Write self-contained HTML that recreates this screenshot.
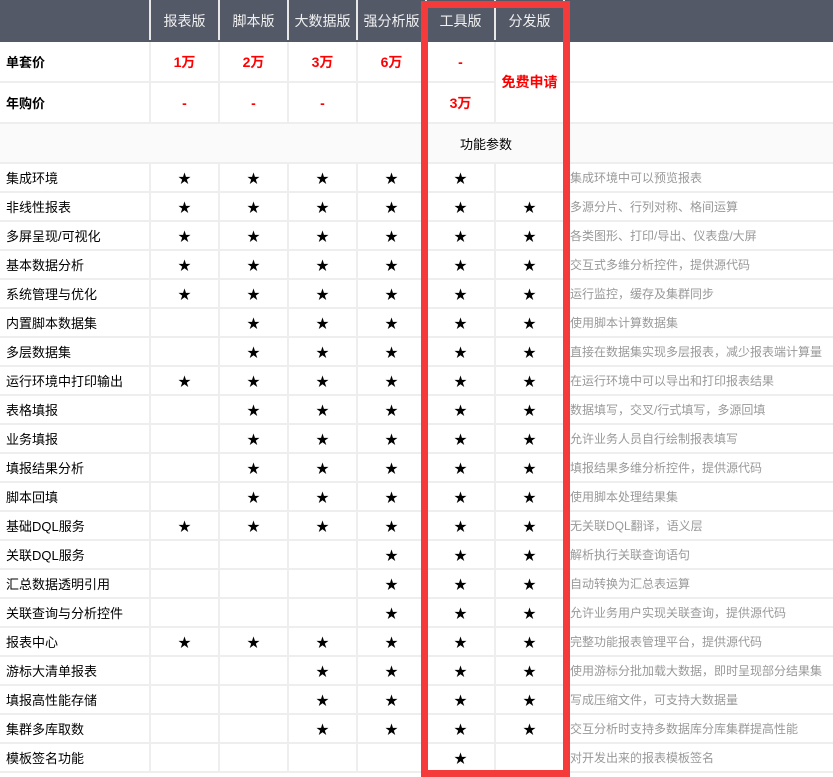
<!DOCTYPE html>
<html><head><meta charset="utf-8"><style>
*{margin:0;padding:0;box-sizing:border-box}
body{width:833px;height:777px;background:#fff;overflow:hidden;position:relative;font-family:"Liberation Sans","Noto Sans CJK SC",sans-serif}
table{border-collapse:collapse;table-layout:fixed;width:833px;position:absolute;left:0;top:0}
td{border:2px solid #eeeeee;text-align:center;font-size:13px;color:#000;padding:0;white-space:nowrap;overflow:hidden}
td:first-child{border-left:none}
tr.h td{background:#535967;color:#f0f0f0;height:40px;border-color:#535967;border-left-color:#e8e8e8;border-right-color:#e8e8e8;font-size:14px}
tr.h td:first-child{border-left-color:#535967}
tr.h td:last-child{border-right-color:#535967}
tr.p td{height:41px}
td.l{text-align:left;padding-left:6px;font-size:13px}
td.b{font-weight:bold}
td.r{color:#f00;font-weight:bold;font-size:14px}
tr.f td{height:29px}
td.d{text-align:left;color:#999;font-size:12px;padding-left:5px;border-left:none;border-right:none}
tr.g td{background:#fafafa;height:40px;border-left:none;border-right:none}
tr.p td.e{border-right:none}
.box{position:absolute;left:421px;top:1px;width:149px;height:776px;border:7px solid #f43a3a}
</style></head><body>
<table>
<colgroup><col style="width:150px"><col style="width:69px"><col style="width:69px"><col style="width:69px"><col style="width:69px"><col style="width:69px"><col style="width:69px"><col style="width:269px"></colgroup>
<tr class="h"><td></td><td>报表版</td><td>脚本版</td><td>大数据版</td><td>强分析版</td><td>工具版</td><td>分发版</td><td></td></tr>
<tr class="p"><td class="l b">单套价</td><td class="r">1万</td><td class="r">2万</td><td class="r">3万</td><td class="r">6万</td><td class="r">-</td><td class="r" rowspan="2">免费申请</td><td class="e" style="border-left:2px solid #eee"></td></tr>
<tr class="p"><td class="l b">年购价</td><td class="r">-</td><td class="r">-</td><td class="r">-</td><td></td><td class="r">3万</td><td class="e"></td></tr>
<tr class="g"><td></td><td></td><td></td><td></td><td></td><td colspan="2" style="padding-right:18px">功能参数</td><td></td></tr>
<tr class="f"><td class="l">集成环境</td><td>★</td><td>★</td><td>★</td><td>★</td><td>★</td><td></td><td class="d">集成环境中可以预览报表</td></tr>
<tr class="f"><td class="l">非线性报表</td><td>★</td><td>★</td><td>★</td><td>★</td><td>★</td><td>★</td><td class="d">多源分片、行列对称、格间运算</td></tr>
<tr class="f"><td class="l">多屏呈现/可视化</td><td>★</td><td>★</td><td>★</td><td>★</td><td>★</td><td>★</td><td class="d">各类图形、打印/导出、仪表盘/大屏</td></tr>
<tr class="f"><td class="l">基本数据分析</td><td>★</td><td>★</td><td>★</td><td>★</td><td>★</td><td>★</td><td class="d">交互式多维分析控件，提供源代码</td></tr>
<tr class="f"><td class="l">系统管理与优化</td><td>★</td><td>★</td><td>★</td><td>★</td><td>★</td><td>★</td><td class="d">运行监控，缓存及集群同步</td></tr>
<tr class="f"><td class="l">内置脚本数据集</td><td></td><td>★</td><td>★</td><td>★</td><td>★</td><td>★</td><td class="d">使用脚本计算数据集</td></tr>
<tr class="f"><td class="l">多层数据集</td><td></td><td>★</td><td>★</td><td>★</td><td>★</td><td>★</td><td class="d">直接在数据集实现多层报表，减少报表端计算量</td></tr>
<tr class="f"><td class="l">运行环境中打印输出</td><td>★</td><td>★</td><td>★</td><td>★</td><td>★</td><td>★</td><td class="d">在运行环境中可以导出和打印报表结果</td></tr>
<tr class="f"><td class="l">表格填报</td><td></td><td>★</td><td>★</td><td>★</td><td>★</td><td>★</td><td class="d">数据填写，交叉/行式填写，多源回填</td></tr>
<tr class="f"><td class="l">业务填报</td><td></td><td>★</td><td>★</td><td>★</td><td>★</td><td>★</td><td class="d">允许业务人员自行绘制报表填写</td></tr>
<tr class="f"><td class="l">填报结果分析</td><td></td><td>★</td><td>★</td><td>★</td><td>★</td><td>★</td><td class="d">填报结果多维分析控件，提供源代码</td></tr>
<tr class="f"><td class="l">脚本回填</td><td></td><td>★</td><td>★</td><td>★</td><td>★</td><td>★</td><td class="d">使用脚本处理结果集</td></tr>
<tr class="f"><td class="l">基础DQL服务</td><td>★</td><td>★</td><td>★</td><td>★</td><td>★</td><td>★</td><td class="d">无关联DQL翻译，语义层</td></tr>
<tr class="f"><td class="l">关联DQL服务</td><td></td><td></td><td></td><td>★</td><td>★</td><td>★</td><td class="d">解析执行关联查询语句</td></tr>
<tr class="f"><td class="l">汇总数据透明引用</td><td></td><td></td><td></td><td>★</td><td>★</td><td>★</td><td class="d">自动转换为汇总表运算</td></tr>
<tr class="f"><td class="l">关联查询与分析控件</td><td></td><td></td><td></td><td>★</td><td>★</td><td>★</td><td class="d">允许业务用户实现关联查询，提供源代码</td></tr>
<tr class="f"><td class="l">报表中心</td><td>★</td><td>★</td><td>★</td><td>★</td><td>★</td><td>★</td><td class="d">完整功能报表管理平台，提供源代码</td></tr>
<tr class="f"><td class="l">游标大清单报表</td><td></td><td></td><td>★</td><td>★</td><td>★</td><td>★</td><td class="d">使用游标分批加载大数据，即时呈现部分结果集</td></tr>
<tr class="f"><td class="l">填报高性能存储</td><td></td><td></td><td>★</td><td>★</td><td>★</td><td>★</td><td class="d">写成压缩文件，可支持大数据量</td></tr>
<tr class="f"><td class="l">集群多库取数</td><td></td><td></td><td>★</td><td>★</td><td>★</td><td>★</td><td class="d">交互分析时支持多数据库分库集群提高性能</td></tr>
<tr class="f"><td class="l">模板签名功能</td><td></td><td></td><td></td><td></td><td>★</td><td></td><td class="d">对开发出来的报表模板签名</td></tr>
</table>
<div class="box"></div>
</body></html>
